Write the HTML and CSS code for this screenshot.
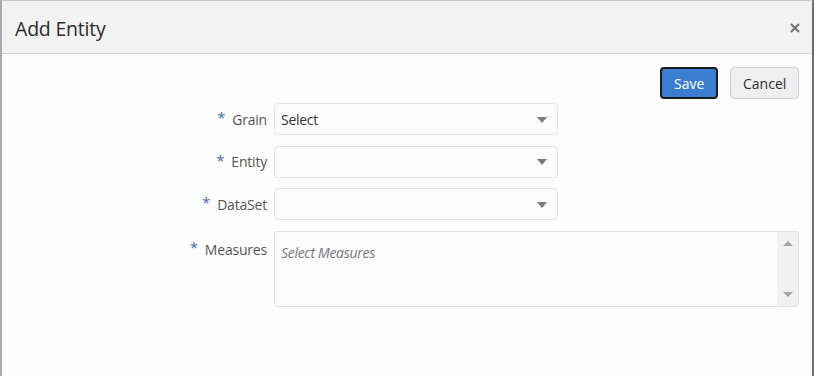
FILE: index.html
```html
<!DOCTYPE html>
<html lang="en">
<head>
<meta charset="utf-8">
<title>Add Entity</title>
<link rel="stylesheet" href="styles.css">
</head>
<body>
<div class="dialog">
  <header class="dlg-header">
    <h1 class="dlg-title">Add Entity</h1>
    <button class="dlg-close" aria-label="Close">
      <svg width="10" height="10" viewBox="0 0 10 10"><path d="M1 1L9 9M9 1L1 9" stroke="#6f6f6f" stroke-width="2" stroke-linecap="butt"/></svg>
    </button>
  </header>
  <div class="dlg-body">
    <div class="toolbar">
      <button class="btn btn-primary">Save</button>
      <button class="btn btn-default">Cancel</button>
    </div>
    <div class="form">
      <label class="lbl"><span class="req">*</span>Grain</label>
      <div class="select"><span class="select-value">Select</span><span class="caret"></span></div>

      <label class="lbl"><span class="req">*</span>Entity</label>
      <div class="select"><span class="select-value"></span><span class="caret"></span></div>

      <label class="lbl"><span class="req">*</span>DataSet</label>
      <div class="select"><span class="select-value"></span><span class="caret"></span></div>

      <label class="lbl lbl-top"><span class="req">*</span>Measures</label>
      <div class="multi">
        <div class="multi-text">Select Measures</div>
        <div class="scrollbar">
          <span class="arrow-up"></span>
          <span class="arrow-down"></span>
        </div>
      </div>
    </div>
  </div>
</div>
</body>
</html>
```
FILE: styles.css
```css
html, body {
  margin: 0;
  padding: 0;
  background: #ffffff;
  font-family: "Open Sans", "Noto Sans", "Liberation Sans", sans-serif;
}

.dialog {
  width: 810px;
  height: 380px;
  border-top: 1px solid #c4c4c4;
  border-left: 2px solid #a9a9a9;
  border-right: 2px solid #6e6e6e;
  background: #fdfdfd;
  box-sizing: content-box;
}

.dlg-header {
  height: 52px;
  background: #f2f2f2;
  border-bottom: 1px solid #d2d2d2;
  display: flex;
  align-items: center;
  justify-content: space-between;
  padding: 0 12px 0 13px;
}

.dlg-title {
  margin: 0;
  font-size: 19.5px;
  font-weight: 400;
  color: #2b2b2b;
  letter-spacing: -0.2px;
  padding-top: 2px;
}

.dlg-close {
  border: 0;
  background: transparent;
  padding: 0;
  width: 10px;
  height: 10px;
  display: flex;
  margin-top: 2px;
}

.dlg-body {
  padding: 13px 13px 0 0;
}

.toolbar {
  display: flex;
  justify-content: flex-end;
  gap: 12px;
}

.btn {
  height: 32px;
  box-sizing: border-box;
  font-family: inherit;
  font-size: 14px;
  border-radius: 4px;
  padding: 0 12px;
  cursor: pointer;
}

.btn-primary {
  width: 58px;
  background: #3a7dd1;
  color: #ffffff;
  border: 2px solid #1c1c1c;
}

.btn-default {
  width: 69px;
  background: #efefef;
  color: #2e2e2e;
  border: 1px solid #cfcfcf;
}

.form {
  margin-top: 4px;
  display: grid;
  grid-template-columns: 265px 1fr;
  column-gap: 7px;
  row-gap: 10.5px;
}

.lbl {
  display: flex;
  align-items: center;
  justify-content: flex-end;
  font-size: 14px;
  color: #555555;
  height: 32px;
  letter-spacing: -0.2px;
}

.lbl-top {
  align-items: flex-start;
  padding-top: 9px;
  height: auto;
}

.req {
  color: #3c6fb4;
  font-size: 15px;
  margin-right: 7px;
  align-self: flex-start;
  margin-top: 4px;
}

.lbl-top .req {
  margin-top: -3px;
}

.select {
  width: 284px;
  height: 32px;
  box-sizing: border-box;
  border: 1px solid #e1e1e1;
  border-radius: 4px;
  background: #fcfcfc;
  display: flex;
  align-items: center;
  justify-content: space-between;
  padding: 0 10px 0 6px;
}

.select-value {
  font-size: 14px;
  color: #333333;
  letter-spacing: -0.3px;
}

.caret {
  width: 0;
  height: 0;
  border-left: 5px solid transparent;
  border-right: 5px solid transparent;
  border-top: 6px solid #7a7a7a;
  margin-top: 1px;
}

.multi {
  height: 76px;
  box-sizing: border-box;
  border: 1px solid #e1e1e1;
  border-radius: 3px;
  background: #fcfcfc;
  display: flex;
}

.multi-text {
  flex: 1;
  padding: 11px 6px;
  font-size: 14px;
  font-style: italic;
  color: #777777;
  letter-spacing: -0.3px;
}

.scrollbar {
  width: 21px;
  background: #f0f0f0;
  display: flex;
  flex-direction: column;
  align-items: center;
  justify-content: space-between;
  padding: 9px 0 9px;
}

.arrow-up {
  width: 0;
  height: 0;
  border-left: 5px solid transparent;
  border-right: 5px solid transparent;
  border-bottom: 5px solid #a3a3a3;
}

.arrow-down {
  width: 0;
  height: 0;
  border-left: 5px solid transparent;
  border-right: 5px solid transparent;
  border-top: 5px solid #a3a3a3;
}
```
